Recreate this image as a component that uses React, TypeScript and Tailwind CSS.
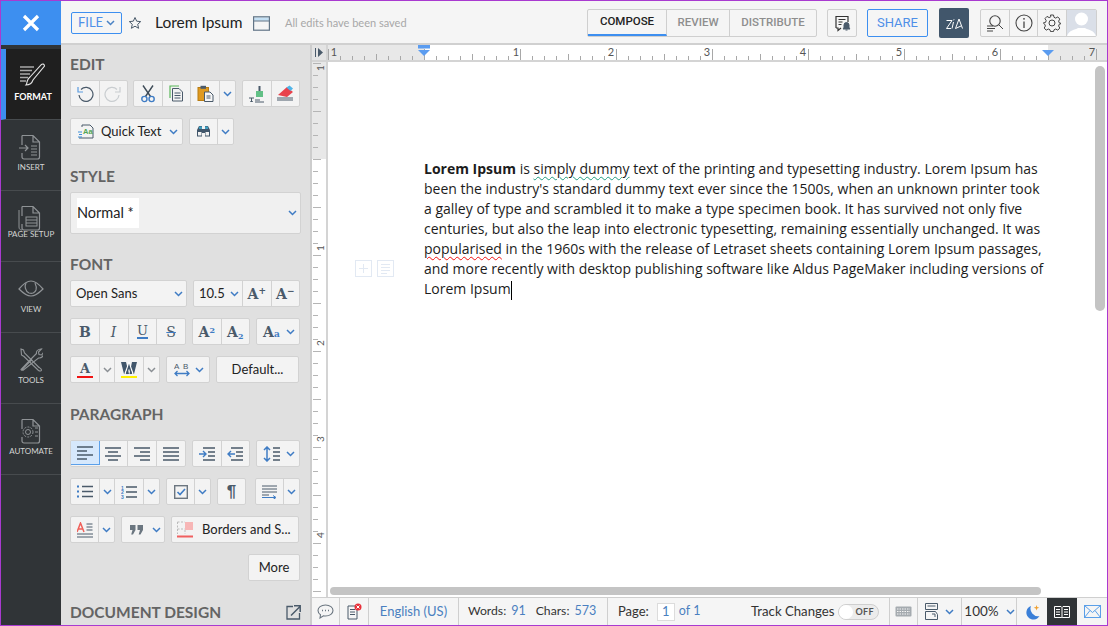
import React from "react";

const S = "#4a5a6a";
const B = "#3f7cc4";

const Svg = ({ w = 20, h = 20, children, className = "" }: { w?: number; h?: number; children?: React.ReactNode; className?: string }) => (
  <svg width={w} height={h} viewBox={`0 0 ${w} ${h}`} fill="none" className={"shrink-0 " + className}>{children}</svg>
);

const Chev = ({ c = B, w = 9 }: { c?: string; w?: number }) => (
  <svg width={w} height={6} viewBox="0 0 9 6" fill="none" className="shrink-0"><path d="M1 1l3.5 3.5L8 1" stroke={c} strokeWidth="1.5" /></svg>
);

const Group = ({ className = "", children }: { className?: string; children?: React.ReactNode }) => (
  <div className={"flex h-[27px] shrink-0 divide-x divide-[#d2d2d2] overflow-hidden rounded-[2px] border border-[#d2d2d2] bg-[#f3f3f3] text-[13px] text-[#222] " + className}>{children}</div>
);

const Cell = ({ className = "flex-1", children }: { className?: string; children?: React.ReactNode }) => (
  <div className={"flex h-full min-w-0 items-center justify-center " + className}>{children}</div>
);

const Arrow = ({ c }: { c?: string }) => <Cell className="w-[15px] shrink-0"><Chev c={c} /></Cell>;

const Heading = ({ className = "", children }: { className?: string; children?: React.ReactNode }) => (
  <div className={"h-[20px] text-[15.5px] font-bold leading-[20px] text-[#646464] " + className}>{children}</div>
);

const Row = ({ className = "mt-[11px]", gap = "gap-[6px]", children }: { className?: string; gap?: string; children?: React.ReactNode }) => (
  <div className={"flex " + gap + " " + className}>{children}</div>
);

const Serif = ({ className = "", children }: { className?: string; children?: React.ReactNode }) => (
  <span className={"font-['DejaVu_Serif',serif] font-bold leading-none text-[#4a5a6a] " + className}>{children}</span>
);

const RailItem = ({ label, active, icon, labelClass = "mt-[1px]" }: { label: string; active?: boolean; icon: React.ReactNode; labelClass?: string }) => (
  <div className={"flex h-[71px] flex-col items-center border-b border-[#474b4e] pt-[13px] " + (active ? "border-l-[5px] border-l-[#3d8ff0] bg-[#1f1f1f] pr-[1px]" : "")}>
    <div className="flex h-[28px] items-center">{icon}</div>
    <div className={"leading-[11px] " + labelClass + " " + (active ? "text-[9px] font-bold text-white" : "text-[8px] text-[#d4d4d4]")}>{label}</div>
  </div>
);

const G = "#8f9396";

const DocIcon = ({ children }: { children?: React.ReactNode }) => (
  <Svg w={26} h={28}>
    <path d="M4 2.5h11l6.5 6.5v15a2 2 0 0 1-2 2H6a2 2 0 0 1-2-2V20M4 12V2.5M15 2.5V9h6.5" stroke={G} strokeWidth="1.2" />
    {children}
  </Svg>
);

const Tabs = () => (
  <div className="flex h-[28px] w-[230px] divide-x divide-[#cfcfcf] rounded-[2px] border border-[#cfcfcf] font-['Roboto',sans-serif] text-[11.5px] font-medium">
    <div className="flex w-[79px] items-center justify-center border-b-2 border-b-[#3d8ff0] text-[#222]">COMPOSE</div>
    <div className="flex w-[63px] items-center justify-center text-[#8e8e8e]">REVIEW</div>
    <div className="flex flex-1 items-center justify-center text-[#8e8e8e]">DISTRIBUTE</div>
  </div>
);

const TopBar = () => (
  <div className="flex h-[44px] shrink-0 items-center border-b-2 border-[#d0d0d0] bg-[#f5f5f5] pl-[10px] pr-[10px] pt-[2px]">
    <div className="flex h-[22px] w-[51px] items-center justify-center gap-[3px] rounded-[2px] border border-[#3d8ff0] text-[13px] text-[#4f8fe8]">FILE<Chev c="#4a82c4" /></div>
    <Svg w={14} h={14} className="ml-[6px]"><path d="M7 1.5l1.7 3.7 4 .4-3 2.7.9 4L7 10.2l-3.6 2.1.9-4-3-2.7 4-.4z" stroke={S} strokeWidth="1" /></Svg>
    <div className="ml-[13px] w-[85px] whitespace-nowrap text-[15.5px] text-[#222]">Lorem Ipsum</div>
    <Svg w={17} h={15} className="ml-[13px]">
      <rect x="1.2" y="1.4" width="14.6" height="3.4" fill="#c4e0f4" />
      <rect x=".6" y=".8" width="15.8" height="13.4" stroke="#627587" strokeWidth="1.2" />
      <path d="M1 5h15.5" stroke="#627587" />
    </Svg>
    <div className="ml-[15px] w-[124px] whitespace-nowrap text-[11px] text-[#a8a8a8]">All edits have been saved</div>
    <div className="ml-[178px]"><Tabs /></div>
    <div className="ml-[10px] flex h-[28px] w-[30px] items-center justify-center rounded-[2px] border border-[#cfcfcf]">
      <Svg w={18} h={18}>
        <path d="M3 14V2.5h12V8M3 14h2v2.5L8 14" stroke="#333" strokeWidth="1.2" />
        <path d="M5.5 5.5h7M5.5 8h4M5.5 10.5h3" stroke="#333" />
        <path d="M10 15c1-1 1-2 1-4a2.5 2.5 0 0 1 5 0c0 2 0 3 1 4zM12.5 16h2" fill="#4a5a6a" stroke="#4a5a6a" />
      </Svg>
    </div>
    <div className="ml-[10px] flex h-[28px] w-[61px] items-center justify-center rounded-[2px] border border-[#3d8ff0] font-['Roboto',sans-serif] text-[13px] text-[#4f8fe8]">SHARE</div>
    <div className="ml-[11px] flex h-[30px] w-[30px] items-center justify-center rounded-[2px] bg-[#41566b]">
      <Svg w={17} h={13}>
        <path d="M.5 3.500H6L.5 11.500H5M7.500 5l-1.500 6.500M8 2.300l-.3 1M9.500 11.500L13 2l3.500 9.500M9.500 11.500l5.500-2.500" stroke="#fff" strokeWidth="1" />
      </Svg>
    </div>
    <div className="ml-[11px] flex h-[28px] w-[117px] divide-x divide-[#cfcfcf] overflow-hidden rounded-[2px] border border-[#cfcfcf]">
      <Cell>
        <Svg w={18} h={18}>
          <circle cx="9" cy="7" r="5.2" stroke="#444" strokeWidth="1.1" />
          <path d="M13 11l4 4M1 12h6M1 14.5h8M1 17h6" stroke="#444" />
        </Svg>
      </Cell>
      <Cell>
        <Svg w={18} h={18}>
          <circle cx="9" cy="9" r="8" stroke="#444" strokeWidth="1.1" />
          <path d="M9 7.5V14" stroke="#444" strokeWidth="1.3" /><circle cx="9" cy="4.8" r=".9" fill="#444" />
        </Svg>
      </Cell>
      <Cell>
        <Svg w={18} h={18}>
          <path d="M7.5 1h3l.5 2.3 1.7.8 2.1-1.2 2 2.2-1.2 2 .7 1.8 2.2.6v0l-2.2.7-.7 1.8 1.2 2-2 2.2-2.1-1.2-1.7.8-.5 1.8h-3l-.5-1.8-1.7-.8-2.1 1.2-2-2.2 1.2-2-.7-1.8L.3 9l2.2-.6.7-1.8-1.2-2 2-2.2 2.1 1.2 1.7-.8z" stroke="#444" strokeWidth="1" />
          <circle cx="9" cy="9" r="3" stroke="#444" />
        </Svg>
      </Cell>
      <div className="flex w-[29px] shrink-0 items-end justify-center overflow-hidden bg-[#dadfe8]">
        <svg width="29" height="26" viewBox="0 0 29 26"><circle cx="14.5" cy="9" r="6.5" fill="#fff" /><path d="M0 26c2-6 8-6 11-8h7c3 2 9 2 11 8z" fill="#fff" /></svg>
      </div>
    </div>
  </div>
);

const PTools = () => (
  <div className="flex w-[250px] shrink-0 flex-col overflow-hidden bg-[#e0e0e0] pl-[9px] pt-[9px] font-['Lato',sans-serif]">
    <Heading>EDIT</Heading>
    <Row className="mt-[6px]" gap="gap-[5px]">
      <Group className="w-[58px]">
        <Cell>
          <Svg w={18} h={18}>
            <path d="M5 4.5A7 7 0 1 1 3 10" stroke="#4a5a6a" strokeWidth="1.2" />
            <path d="M2 2v5h5" stroke="#5a9be0" strokeWidth="1.2" />
          </Svg>
        </Cell>
        <Cell>
          <Svg w={18} h={18}>
            <path d="M13 4.5A7 7 0 1 0 15 10" stroke="#c9cdd0" strokeWidth="1.2" />
            <path d="M16 2v5h-5" stroke="#c9cdd0" strokeWidth="1.2" />
          </Svg>
        </Cell>
      </Group>
      <Group className="w-[103px]">
        <Cell>
          <Svg w={14} h={18}>
            <path d="M2 .5l7.5 11M12 .5L4.5 11.5" stroke="#3f4c58" strokeWidth="1.4" />
            <circle cx="3.4" cy="14" r="2.6" stroke="#3f7cc4" strokeWidth="1.4" />
            <circle cx="10.6" cy="14" r="2.6" stroke="#3f7cc4" strokeWidth="1.4" />
          </Svg>
        </Cell>
        <Cell>
          <Svg w={15} h={17}>
            <path d="M1 13V1h9" stroke="#5bb85b" strokeWidth="1.2" />
            <path d="M3.5 3.5h6.5l3.5 3.5v9h-10z" fill="#f3f3f3" stroke="#4a5a6a" />
            <path d="M5.5 8h6M5.5 10.5h6M5.5 13h6" stroke="#4a5a6a" />
          </Svg>
        </Cell>
        <Cell>
          <Svg w={17} h={17}>
            <rect x="1" y="2.5" width="10.5" height="13" fill="#e09a20" stroke="#b87c12" />
            <rect x="3.5" y=".8" width="5.5" height="3" fill="#4a5a6a" />
            <path d="M7.5 7h5.5l3 3v6.5H7.5z" fill="#f7f7f7" stroke="#4a5a6a" />
            <path d="M9.5 11h4M9.5 13h4" stroke="#4a5a6a" />
          </Svg>
        </Cell>
        <Arrow />
      </Group>
      <Group className="ml-[1px] w-[58px]">
        <Cell>
          <Svg w={18} h={18}>
            <rect x="8" y="6" width="7" height="6" fill="#62c086" />
            <path d="M11.5 1v5" stroke="#4a5a6a" strokeWidth="2" />
            <path d="M1 13h5M3.5 13v3.5M2.3 16.5h2.5M7 15h5M7 17h9" stroke="#4a5a6a" />
          </Svg>
        </Cell>
        <Cell>
          <Svg w={18} h={18}>
            <path d="M2 10l9-8 6 5-6 5z" fill="#e8424c" />
            <path d="M10.5 2.5l3-2 3.5 3-2.5 2.5z" fill="#4fb4e8" />
            <path d="M1 13h16M1 15h16" stroke="#4a5a6a" />
          </Svg>
        </Cell>
      </Group>
    </Row>
    <Row>
      <Group className="w-[113px]">
        <div className="flex w-full items-center pl-[7px]">
          <Svg w={16} h={15}>
            <path d="M4 3V1h8l3 3v10H1" stroke="#4a5a6a" />
            <path d="M0 8h4M1 10.5h3M0 13h4" stroke="#3f8fd8" />
            <text x="5" y="10" fontSize="7.5" fontWeight="700" fill="#53a653" fontFamily="Liberation Sans">Aa</text>
          </Svg>
          <span className="ml-[7px] text-[13px]">Quick Text</span>
          <span className="ml-[8px]"><Chev /></span>
        </div>
      </Group>
      <Group className="w-[45px]">
        <Cell>
          <Svg w={15} h={13}>
            <path d="M1 11V5l2-4h3v3h3V1h3l2 4v6.5h-5V8H6v3.5H1z" fill="#41566b" />
            <rect x="2" y="7" width="3.5" height="3.5" fill="#f3f3f3" />
            <rect x="9.5" y="7" width="3.5" height="3.5" fill="#f3f3f3" />
            <rect x="3" y="1.5" width="3" height="2.5" fill="#3f9dbf" /><rect x="9" y="1.5" width="3" height="2.5" fill="#3f9dbf" />
          </Svg>
        </Cell>
        <Arrow />
      </Group>
    </Row>

    <Heading className="mt-[21px]">STYLE</Heading>
    <div className="mt-[6px] flex h-[42px] w-[231px] items-center rounded-[2px] border border-[#d2d2d2] bg-[#f0f0f0] pl-[6px] pr-[3px]">
      <div className="flex h-[30px] w-[62px] items-center bg-white text-[14.5px] text-[#222]">Normal *</div>
      <span className="ml-auto"><Chev /></span>
    </div>

    <Heading className="mt-[20px]">FONT</Heading>
    <Row className="mt-[6px]">
      <Group className="w-[117px]">
        <div className="flex w-full items-center justify-between pl-[5px] pr-[3px]"><span className="text-[13px]">Open Sans</span><Chev /></div>
      </Group>
      <Group className="w-[107px]">
        <div className="flex w-[49px] shrink-0 items-center justify-between pl-[5px] pr-[3px]"><span className="text-[13px]">10.5</span><Chev /></div>
        <Cell><Serif className="text-[14px]">A<sup className="text-[9px]">+</sup></Serif></Cell>
        <Cell><Serif className="text-[14px]">A<sup className="text-[9px]">−</sup></Serif></Cell>
      </Group>
    </Row>
    <Row>
      <Group className="w-[116px]">
        <Cell><Serif className="text-[14px]">B</Serif></Cell>
        <Cell><Serif className="text-[14px] font-normal italic">I</Serif></Cell>
        <Cell><Serif className="border-b-2 border-[#3f7cc4] text-[13px] font-normal">U</Serif></Cell>
        <Cell><Serif className="relative text-[14px] font-normal line-through decoration-[#3f7cc4]">S</Serif></Cell>
      </Group>
      <Group className="w-[58px]">
        <Cell><Serif className="text-[14px]">A<sup className="text-[8px] text-[#3f7cc4]">2</sup></Serif></Cell>
        <Cell><Serif className="text-[14px]">A<sub className="text-[8px] text-[#3f7cc4]">2</sub></Serif></Cell>
      </Group>
      <Group className="w-[44px]">
        <div className="flex w-full items-center justify-between pl-[6px] pr-[4px]"><Serif className="text-[14px]">A<span className="text-[9px] text-[#3f7cc4]">a</span></Serif><Chev /></div>
      </Group>
    </Row>
    <Row>
      <Group className="w-[90px]">
        <Cell className="w-[29px] shrink-0"><span className="flex flex-col items-center"><Serif className="text-[13px]">A</Serif><span className="mt-[1px] h-[2px] w-[16px] bg-[#f01414]" /></span></Cell>
        <Arrow c="#8a8f94" />
        <Cell className="w-[29px] shrink-0">
          <span className="flex flex-col items-center">
            <Svg w={16} h={13}><path d="M0 0h5l3 12H3zM16 0h-5L8.500 12H13z" fill="#41566b" /><path d="M4 12L8 1l4 11M6 8h4" stroke="#fff" strokeWidth="1.5" /><path d="M5.500 12L8 4l2.500 8" stroke="#41566b" strokeWidth="1.5" /></Svg>
            <span className="mt-[1px] h-[2px] w-[16px] bg-[#fff000]" />
          </span>
        </Cell>
        <Arrow c="#8a8f94" />
      </Group>
      <Group className="w-[44px]">
        <div className="flex w-full items-center justify-between pl-[7px] pr-[5px]">
          <Svg w={16} h={15}>
            <text x="0" y="7" fontSize="8" fill="#4a5a6a" fontFamily="Liberation Sans">A</text>
            <text x="9" y="7" fontSize="8" fill="#4a5a6a" fontFamily="Liberation Sans">B</text>
            <path d="M1 11.500h14M3.500 9L1 11.500 3.500 14M12.500 9l2.500 2.500-2.500 2.500" stroke="#3f7cc4" strokeWidth="1.3" />
          </Svg>
          <Chev />
        </div>
      </Group>
      <Group className="w-[83px]"><Cell><span className="text-[13px]">Default...</span></Cell></Group>
    </Row>

    <Heading className="mt-[21px]">PARAGRAPH</Heading>
    <Row className="mt-[16px]">
      <Group className="w-[116px]">
        <Cell className="flex-1 -m-px border border-[#5ba0ea] bg-[#d6e8fc]">
          <Svg w={16} h={14}><path d="M0 1h16M0 5h10M0 9h16M0 13h10" stroke={S} strokeWidth="1.3" /></Svg>
        </Cell>
        <Cell><Svg w={16} h={14}><path d="M0 1h16M3 5h10M0 9h16M3 13h10" stroke={S} strokeWidth="1.3" /></Svg></Cell>
        <Cell><Svg w={16} h={14}><path d="M0 1h16M6 5h10M0 9h16M6 13h10" stroke={S} strokeWidth="1.3" /></Svg></Cell>
        <Cell><Svg w={16} h={14}><path d="M0 1h16M0 5h16M0 9h16M0 13h16" stroke={S} strokeWidth="1.3" /></Svg></Cell>
      </Group>
      <Group className="w-[58px]">
        <Cell><Svg w={16} h={14}><path d="M4 1h12M9 5h7M9 9h7M4 13h12" stroke={S} strokeWidth="1.3" /><path d="M0 7h7M4 4l3 3-3 3" stroke={B} strokeWidth="1.4" /></Svg></Cell>
        <Cell><Svg w={16} h={14}><path d="M4 1h12M9 5h7M9 9h7M4 13h12" stroke={S} strokeWidth="1.3" /><path d="M1 7h7M4 4L1 7l3 3" stroke={B} strokeWidth="1.4" /></Svg></Cell>
      </Group>
      <Group className="w-[44px]">
        <div className="flex w-full items-center justify-between pl-[6px] pr-[4px]">
          <Svg w={17} h={16}><path d="M4 1v14M1 4l3-3 3 3M1 12l3 3 3-3" stroke={B} strokeWidth="1.5" /><path d="M10 2h7M10 6h7M10 10h7M10 14h7" stroke={S} strokeWidth="1.3" /></Svg>
          <Chev />
        </div>
      </Group>
    </Row>
    <Row>
      <Group className="w-[90px]">
        <Cell className="w-[29px] shrink-0"><Svg w={16} h={13}><path d="M0 1.500h2M0 6.500h2M0 11.500h2" stroke={B} strokeWidth="2" /><path d="M5 1.500h11M5 6.500h11M5 11.500h11" stroke={S} strokeWidth="1.3" /></Svg></Cell>
        <Arrow />
        <Cell className="w-[29px] shrink-0">
          <Svg w={16} h={14}>
            <text x="0" y="4.500" fontSize="5" fontWeight="700" fill={B} fontFamily="Liberation Sans">1</text>
            <text x="0" y="9" fontSize="5" fontWeight="700" fill={B} fontFamily="Liberation Sans">2</text>
            <text x="0" y="14" fontSize="5" fontWeight="700" fill={B} fontFamily="Liberation Sans">3</text>
            <path d="M5 2h11M5 7h11M5 12h11" stroke={S} strokeWidth="1.3" />
          </Svg>
        </Cell>
        <Arrow />
      </Group>
      <Group className="w-[45px]">
        <Cell><Svg w={14} h={14}><rect x=".7" y=".7" width="12.600" height="12.600" stroke="#6c7680" strokeWidth="1.400" /><path d="M3.500 7l2.500 2.500 5-5.500" stroke={B} strokeWidth="1.600" /></Svg></Cell>
        <Arrow />
      </Group>
      <Group className="w-[29px]"><Cell><Serif className="font-['Liberation_Sans',sans-serif] text-[17px]">¶</Serif></Cell></Group>
      <Group className="ml-[3px] w-[45px]">
        <Cell>
          <Svg w={15} h={14}><path d="M0 1h15M0 4h15M0 7h15M0 10h7" stroke={S} /><path d="M0 12.500h13M11 10.500l3 2-3 2" stroke={B} /></Svg>
        </Cell>
        <Arrow />
      </Group>
    </Row>
    <Row>
      <Group className="w-[45px]">
        <Cell>
          <Svg w={16} h={16}>
            <path d="M0 10L3.500 1 7 10M1.500 7h4" stroke="#f0605a" strokeWidth="1.500" />
            <path d="M9.500 2h6M9.500 5h6M9.500 8h6M0 12h16M0 15h16" stroke={S} />
          </Svg>
        </Cell>
        <Arrow />
      </Group>
      <Group className="w-[44px]">
        <div className="flex w-full items-center justify-between pl-[8px] pr-[3px]">
          <Svg w={13} h={10}><path d="M0 0h5.500v5L3 9.500H1.200L2.500 5H0zM7.500 0H13v5l-2.500 4.500H8.700L10 5H7.500z" fill="#6b7680" /></Svg>
          <Chev />
        </div>
      </Group>
      <Group className="w-[128px]">
        <div className="flex w-full items-center pl-[5px]">
          <Svg w={17} h={18}>
            <rect x="8" y="1" width="8" height="8" fill="#f7b6b6" />
            <path d="M.5 1v12M8 9v4M.500 8H8M.5 1H8" stroke="#bbb" strokeDasharray="2 1.500" />
            <path d="M0 15.500h16" stroke="#f06060" strokeWidth="2" />
          </Svg>
          <span className="ml-[8px] whitespace-nowrap text-[13px]">Borders and S...</span>
        </div>
      </Group>
    </Row>
    <Row className="mt-[11px]" gap="justify-end pr-[11px]">
      <Group className="w-[52px]"><Cell><span className="text-[13px]">More</span></Cell></Group>
    </Row>
    <div className="mt-[21px] flex w-[231px] items-center justify-between">
      <Heading>DOCUMENT DESIGN</Heading>
      <Svg w={15} h={15}><path d="M7 1.500H1v12.500h12.500V8" stroke="#4a5a6a" strokeWidth="1.300" /><path d="M5 10.500L14 1.500M8 .8h6.200V7" stroke="#4a5a6a" strokeWidth="1.500" /></Svg>
    </div>
  </div>
);

const HRuler = () => {
  const ticks: React.ReactNode[] = [];
  for (let x = 327; x <= 1107; x += 12) {
    const major = (x - 423) % 96 === 0;
    const half = (x - 423) % 48 === 0;
    ticks.push(<path key={x} d={`M${x - 327 + 0.5} 15V${major ? 4 : half ? 9 : 11}`} stroke="#a8a8a8" />);
  }
  const labels = [[333, "1"], [515, "1"], [610, "2"], [706, "3"], [802, "4"], [898, "5"], [994, "6"], [1091, "7"]] as const;
  return (
    <div className="flex h-[17px] shrink-0 items-stretch border-b-2 border-[#d4d4d4] bg-white">
      <div className="flex w-[16px] shrink-0 items-center justify-center border-r-2 border-[#d4d4d4] bg-[#e4e4e4]">
        <Svg w={9} h={9}><path d="M.5 0v9" stroke={S} /><path d="M3 0l5 4.500L3 9z" fill={S} /></Svg>
      </div>
      <svg width="781" height="15" viewBox="0 0 781 15" className="shrink-0">
        <rect x="0" width="96" height="15" fill="#e8e8e8" />
        <rect x="720" width="61" height="15" fill="#e8e8e8" />
        {ticks}
        {labels.map(([x, t]) => (
          <text key={x} x={x - 327} y="11" fontSize="11" fill="#555" textAnchor="middle" fontFamily="Lato">{t}</text>
        ))}
        <rect x="90" y="0" width="12" height="3.500" fill="#5b9cf0" />
        <path d="M90 5h12l-6 6z" fill="#5b9cf0" />
        <path d="M714 5h12l-6 6z" fill="#5b9cf0" />
      </svg>
    </div>
  );
};

const VRuler = () => {
  const ticks: React.ReactNode[] = [];
  for (let y = 1; y < 540; y += 12) {
    ticks.push(<path key={y} d={`M1 ${y + 0.5}H${(y - 97) % 48 === 0 ? 9 : 6}`} stroke="#b5b5b5" />);
  }
  return (
    <div className="w-[16px] shrink-0 border-r-2 border-[#d4d4d4]">
      <svg width="14" height="536" viewBox="0 0 14 536">
        <rect width="14" height="97" fill="#e8e8e8" />
        {ticks}
        {[[6, "1"], [186, "1"], [281, "2"], [377, "3"], [473, "4"]].map(([y, t]) => (
          <text key={y} fontSize="10" fill="#555" textAnchor="middle" fontFamily="Lato" transform={`translate(8 ${y}) rotate(-90) translate(0 3.500)`}>{t}</text>
        ))}
      </svg>
    </div>
  );
};

const Doc = () => (
  <div className="relative min-h-0 flex-1 overflow-hidden bg-white">
    <div className="ml-[96px] w-[625px] pt-[97px] font-['Open_Sans',sans-serif] text-[14px] leading-[20px] text-[#1c1c1c]">
      <b>Lorem Ipsum</b> is <span className="underline decoration-[#1f9c80] decoration-wavy decoration-1 underline-offset-2">simply dummy</span> text of the printing and typesetting industry. Lorem Ipsum has been the industry's standard dummy text ever since the 1500s, when an unknown printer took a galley of type and scrambled it to make a type specimen book. It has survived not only five centuries, but also the leap into electronic typesetting, remaining essentially unchanged. It was <span className="underline decoration-[#f01010] decoration-wavy decoration-1 underline-offset-2">popularised</span> in the 1960s with the release of Letraset sheets containing Lorem Ipsum passages, and more recently with desktop publishing software like Aldus PageMaker including versions of Lorem Ipsum<span className="inline-block h-[19px] w-px bg-black align-middle" />
    </div>
    <div className="absolute left-[27px] top-[198px] flex gap-[5px]">
      <Svg w={17} h={17}><rect x=".5" y=".5" width="16" height="16" stroke="#e2e9f3" /><path d="M8.500 4v9M4 8.500h9" stroke="#e2e9f3" /></Svg>
      <Svg w={17} h={17}><rect x=".5" y=".5" width="16" height="16" stroke="#e2e9f3" /><path d="M4 4.500h9M4 7.500h9M4 10.500h9M4 13.500h6" stroke="#e2e9f3" /></Svg>
    </div>
    <div className="absolute left-[767px] top-[4px] h-[245px] w-[10px] rounded-[5px] bg-[#c4c4c4]" />
    <div className="absolute left-[2px] top-[525px] h-[8px] w-[711px] rounded-[4px] bg-[#c4c4c4]" />
  </div>
);

const Sep = "border-r border-[#cfcfcf]";

const Status = () => (
  <div className="flex h-[28px] shrink-0 items-center border-t border-[#cfcfcf] bg-[#f5f5f5] font-['Lato',sans-serif] text-[13px] text-[#333]">
    <div className={"flex h-full w-[28px] items-center justify-center " + Sep}>
      <Svg w={17} h={15}><path d="M8.500 1C4 1 1 3.500 1 6.500c0 1.800 1 3.300 2.500 4.300L3 14l3.500-2.200c.6.100 1.300.2 2 .2 4.500 0 7.500-2.500 7.500-5.500S13 1 8.500 1z" stroke="#6b7680" strokeWidth="1.100" /><path d="M5 6.500h1M8 6.500h1M11 6.500h1" stroke="#6b7680" strokeWidth="1.500" /></Svg>
    </div>
    <div className={"flex h-full w-[29px] items-center justify-center " + Sep}>
      <Svg w={15} h={17}><path d="M1 3h9v13H1z" stroke="#4a5a6a" /><path d="M3 6.500h5M3 9h5M3 11.500h5" stroke="#4a5a6a" /><circle cx="11" cy="4" r="3.500" fill="#e8303a" /><path d="M9.500 2.500l3 3M12.500 2.500l-3 3" stroke="#fff" /></Svg>
    </div>
    <div className={"flex h-full w-[90px] items-center justify-center text-[#4a7fc0] " + Sep}>English (US)</div>
    <div className={"flex h-full w-[149px] items-center pl-[9px] text-[12.2px] " + Sep}>
      <span>Words:</span><span className="ml-[5px] text-[12.5px] text-[#4a7fc0]">91</span>
      <span className="ml-[10px]">Chars:</span><span className="ml-[5px] text-[12.5px] text-[#4a7fc0]">573</span>
    </div>
    <div className="flex h-full w-[124px] shrink-0 items-center pl-[10px]">
      <span>Page:</span>
      <span className="ml-[8px] flex h-[18px] w-[18px] items-center justify-center border border-[#dcdcdc] bg-white text-[#4a7fc0]">1</span>
      <span className="ml-[4px] text-[12.5px] text-[#4a7fc0]">of 1</span>
    </div>
    <span className="ml-[19px] whitespace-nowrap text-[13.2px]">Track Changes</span>
    <div className="ml-[4px] flex h-[16px] w-[41px] items-center rounded-full border border-[#cfcfcf] bg-[#ececec]">
      <span className="h-[14px] w-[14px] rounded-full bg-white" />
      <span className="ml-[2px] text-[9px] font-bold tracking-[0.3px] text-[#555]">OFF</span>
    </div>
    <div className="ml-[10px] flex h-full w-[29px] items-center justify-center border-x border-[#cfcfcf]">
      <Svg w={17} h={11}><rect x=".5" y=".5" width="16" height="10" rx="1" fill="#a5abb0" /><path d="M2 3h13M2 5.500h13M2 8h13" stroke="#f5f5f5" strokeDasharray="1.500 1" /></Svg>
    </div>
    <div className={"flex h-full w-[44px] items-center justify-center gap-[7px] " + Sep}>
      <Svg w={13} h={17}><path d="M.5 .5h12v6H.5zM.5 8.500v8M.5 16.500h12v-5l-2-3H.5M2.500 3h8" stroke="#4a5a6a" /><path d="M7 11h3v3" stroke="#4a5a6a" /></Svg>
      <Chev />
    </div>
    <div className={"flex h-full w-[55px] items-center justify-center gap-[7px] " + Sep}>
      <span className="text-[13.5px]">100%</span><Chev />
    </div>
    <div className="flex h-full w-[30px] items-center justify-center">
      <Svg w={15} h={16}><path d="M6 2a7 7 0 1 0 8.500 10A7.500 7.500 0 0 1 6 2z" fill="#3a7fd8" /><path d="M11.500 1l.7 2.100 2.100.7-2.100.7-.7 2.100-.7-2.100-2.100-.7 2.100-.7z" fill="#f0a030" /></Svg>
    </div>
    <div className="flex h-full w-[30px] items-center justify-center bg-[#303437]">
      <Svg w={16} h={12}><path d="M.5 .5H7l1 1 1-1h6.500v11H9l-1 .5-1-.5H.5zM8 1.500V12" stroke="#fff" /><path d="M2 3.500h4M2 6h4M2 8.500h4M10 3.500h4M10 6h4M10 8.500h4" stroke="#fff" /></Svg>
    </div>
    <div className="flex h-full flex-1 items-center justify-center">
      <Svg w={17} h={13}><rect x=".5" y=".5" width="16" height="12" stroke="#5a9fe8" /><path d="M.5 .5l8 7 8-7M.5 12.500l5.500-7M16.500 12.500l-5.500-7" stroke="#5a9fe8" /></Svg>
    </div>
  </div>
);

export default function App() {
  return (
    <div className="flex h-[626px] w-[1108px] overflow-hidden border border-[#a93ad0] font-['Lato',sans-serif]">
      <div className="flex w-[60px] shrink-0 flex-col bg-[#303437] font-['Lato',sans-serif]">
        <div className="flex h-[44px] shrink-0 items-center justify-center bg-[#3d8ff0]">
          <Svg w={18} h={18}><path d="M2 2l14 14M16 2L2 16" stroke="#fff" strokeWidth="3.200" /></Svg>
        </div>
        <div className="h-[4px] shrink-0" />
        <RailItem label="FORMAT" active icon={
          <Svg w={26} h={26}>
            <path d="M0 4h14M0 7.500h12M0 11h10M0 14.500h8M0 18h6" stroke="#a8a8a8" strokeWidth="1.300" />
            <path d="M10 14L21.500 1.500c1-1 3-.5 3 1.500L13 17c-1 3-3 5-7 5 1-1 .5-2 1.500-4.500s2-3 2.500-3.500z" stroke="#e4e4e4" strokeWidth="1.100" fill="#1f1f1f" />
          </Svg>
        } />
        <RailItem label="INSERT" icon={<DocIcon><path d="M1 15h9M7 12l3 3-3 3" stroke={G} strokeWidth="1.200" /><path d="M13 13h6M13 16h6M13 19h6M13 22h6" stroke={G} strokeWidth="1.200" /></DocIcon>} />
        <RailItem label="PAGE SETUP" labelClass="-mt-[3px]" icon={<DocIcon><path d="M1 6v17c0 2 1 3 3 3" stroke={G} /><rect x="8" y="13" width="11" height="9" stroke={G} /><path d="M8 16h11M8 19h11" stroke={G} /></DocIcon>} />
        <RailItem label="VIEW" icon={
          <Svg w={26} h={18}>
            <path d="M1 9c5-6 9-8 12-8s7 2 12 8c-5 5-9 7-12 7s-7-2-12-7z" stroke={G} strokeWidth="1.200" />
            <path d="M8 3c-1.500 3-1 8 3 10 3 1 6 0 7-3 .5-2 0-5-1-7" stroke={G} strokeWidth="1.200" />
          </Svg>
        } />
        <RailItem label="TOOLS" icon={
          <Svg w={24} h={24}>
            <path d="M2 1l2.500 1 1 3 14 14c1 1 3 1.500 3 3 0 1-1.500 1.500-3 .5L5 8.500 2.500 7z" stroke={G} strokeWidth="1.100" />
            <path d="M3 21.500l10-10M14 9l3.500-3.500c-.5-2 1-4.500 5-4.500l-3 3 .5 2.500 2.500.5 2-2.500c.5 3.500-2 6-5 5.500L5 21.500c-1 1-3 1-3 0z" stroke={G} strokeWidth="1.100" />
          </Svg>
        } />
        <RailItem label="AUTOMATE" icon={<DocIcon><circle cx="10" cy="15" r="2.500" stroke={G} /><circle cx="10" cy="15" r="5" stroke={G} strokeDasharray="2 1.200" /><path d="M17 11h3M17 15h3M17 19h3" stroke={G} /></DocIcon>} />
      </div>
      <div className="flex min-w-0 flex-1 flex-col">
        <TopBar />
        <div className="flex min-h-0 flex-1">
          <PTools />
          <div className="-ml-px flex min-w-0 flex-1 flex-col border-l-2 border-[#cdcdcd]">
            <HRuler />
            <div className="flex min-h-0 flex-1">
              <VRuler />
              <Doc />
            </div>
            <Status />
          </div>
        </div>
      </div>
    </div>
  );
}
